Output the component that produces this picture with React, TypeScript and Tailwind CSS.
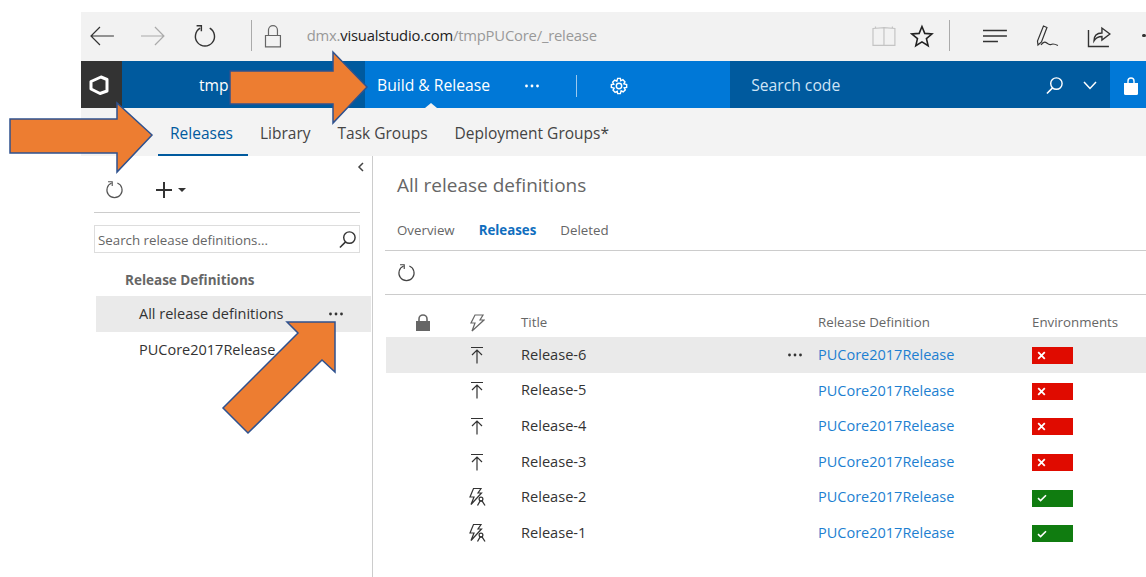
import React from "react";

const Ic = ({ w, h, vb, className, children }: { w: number; h: number; vb?: string; className?: string; children: React.ReactNode }) => (
  <svg width={w} height={h} viewBox={vb ?? `0 0 ${w} ${h}`} fill="none" stroke="currentColor" strokeWidth={1.2} className={className}>
    {children}
  </svg>
);

const Refresh = ({ s = 20, className }: { s?: number; className?: string }) => (
  <Ic w={s} h={s} vb="0 0 20 20" className={className}>
    <path d="M7 3.2A8 8 0 1 0 13 3.2" />
    <path d="M3.2 1.8H7.6V6.2" />
  </Ic>
);

const Search = ({ s = 20, className }: { s?: number; className?: string }) => (
  <Ic w={s} h={s} vb="0 0 20 20" className={className}>
    <circle cx="12" cy="8" r="6" strokeWidth={1.5} />
    <path d="M8 12.5L2 18.5" strokeWidth={1.6} />
  </Ic>
);

const Dots = ({ className }: { className?: string }) => (
  <svg width="16" height="4" viewBox="0 0 16 4" fill="currentColor" className={className}>
    <circle cx="2.5" cy="2" r="1.4" />
    <circle cx="8" cy="2" r="1.4" />
    <circle cx="13.5" cy="2" r="1.4" />
  </svg>
);

const UpBar = () => (
  <Ic w={14} h={18} className="text-[#333]">
    <path d="M1 1.5H13M7 17.5V4M2 9L7 4L12 9" />
  </Ic>
);

const BoltPerson = () => (
  <Ic w={20} h={20} className="text-[#333]">
    <path d="M6.5 1.5H14L11 6H14.5L4 17.5L7 10H3Z" strokeWidth={1.2} />
    <circle cx="14" cy="12" r="1.9" strokeWidth={1.2} />
    <path d="M10.5 18.5L13 14.2H15.2L18 18.5" strokeWidth={1.3} />
  </Ic>
);

const rows = [
  { t: "Release-6", up: true, ok: false, hl: true },
  { t: "Release-5", up: true, ok: false },
  { t: "Release-4", up: true, ok: false },
  { t: "Release-3", up: true, ok: false },
  { t: "Release-2", up: false, ok: true },
  { t: "Release-1", up: false, ok: true },
];

function Row({ t, up, ok, hl }: { t: string; up: boolean; ok: boolean; hl?: boolean }) {
  return (
    <div className={`flex h-[35.6px] items-center ${hl ? "bg-[#eaeaea]" : ""}`}>
      <div className="ml-[71px] flex w-[40px] justify-center">{up ? <UpBar /> : <BoltPerson />}</div>
      <div className="ml-[24px] w-[266px] text-[14.6px] text-[#333]">{t}</div>
      <div className="flex w-[31px] items-center">{hl && <Dots className="text-[#333]" />}</div>
      <div className="w-[214px] text-[14.5px] text-[#1d7fd1]">PUCore2017Release</div>
      <div className={`mt-[2px] flex h-[17px] w-[41px] items-center pl-[5px] ${ok ? "bg-[#107c10]" : "bg-[#e00b00]"}`}>
        {ok ? (
          <svg width="10" height="8" viewBox="0 0 10 8" fill="none" stroke="white" strokeWidth={1.6}>
            <path d="M1 4.2L3.6 6.6L9 1.2" />
          </svg>
        ) : (
          <svg width="9" height="9" viewBox="0 0 9 9" fill="none" stroke="white" strokeWidth={1.8}>
            <path d="M1.2 1.2L7.8 7.8M7.8 1.2L1.2 7.8" />
          </svg>
        )}
      </div>
    </div>
  );
}

export default function App() {
  return (
    <div className="relative h-[577px] w-[1146px] overflow-hidden bg-white pl-[81px] pt-[12px] font-['Open_Sans',sans-serif]">
      {/* Browser toolbar */}
      <div className="flex h-[49px] items-center bg-[#f2f2f2] pb-[2px] text-[#222]">
        <Ic w={26} h={22} className="ml-[8px] text-[#333]">
          <path d="M25 11H2M11 2L2 11L11 20" />
        </Ic>
        <Ic w={26} h={22} className="ml-[25px] text-[#aaa]">
          <path d="M1 11H24M15 2L24 11L15 20" />
        </Ic>
        <Ic w={24} h={24} vb="0 0 20 20" className="ml-[27px] text-[#333]">
          <path d="M6 3.5A8 8 0 1 0 14 3.5" />
          <path d="M3 1.5H7V6" />
        </Ic>
        <div className="ml-[34px] h-[31px] w-px bg-[#aaa]" />
        <Ic w={18} h={24} className="ml-[12px] text-[#666]">
          <path d="M1.5 11.5H16.5V23H1.5ZM4.5 11.5V6A4.5 4.5 0 0 1 13.5 6V11.5" />
        </Ic>
        <div className="ml-[25px] w-[568px] whitespace-nowrap text-[14.8px] tracking-[-0.2px] text-[#999]">
          dmx.<span className="text-[#222]">visualstudio.com</span>/tmpPUCore/_release
        </div>
        <Ic w={24} h={22} className="text-[#c4c4c4]">
          <path d="M1 3.5L12 2.5V20.5H1ZM12 2.5L23 3.5V20.5H12ZM3.5 1.5V3M20.5 1.5V3" />
        </Ic>
        <Ic w={24} h={24} className="ml-[14px] text-[#222]">
          <path strokeWidth={1.6} d="M12 2.5L14.8 9.4L22 10L16.5 14.6L18.2 21.8L12 17.9L5.8 21.8L7.5 14.6L2 10L9.2 9.4Z" />
        </Ic>
        <div className="ml-[15px] h-[31px] w-px bg-[#aaa]" />
        <Ic w={24} h={14} className="ml-[33px] text-[#333]">
          <path strokeWidth={1.4} d="M0 1.5H24M0 7H24M0 12.5H15" />
        </Ic>
        <Ic w={24} h={24} className="ml-[28px] text-[#333]">
          <path d="M8.5 2L12 3.5L6.5 18L3 21L2.5 17ZM6 21C11 14 12 22 16 20.5C18 19.5 20 20 23 21.5" />
        </Ic>
        <Ic w={24} h={24} className="ml-[28px] text-[#333]">
          <path strokeWidth={1.4} d="M1.5 6V22.5H22M7 17C7 11 11 9 15 9V4L23 10L15 16V12.5C12 12.5 9 13.5 7 17Z" />
        </Ic>
        <div className="ml-[31px] h-[3px] w-[4px] shrink-0 rounded-full bg-[#333]" />
      </div>

      {/* Blue nav */}
      <div className="relative flex h-[47px] items-stretch bg-[#0078d7] pt-[2px] text-white">
        <div className="-mt-[2px] flex w-[41px] items-center justify-center bg-[#333] pr-[6px]">
          <svg width="24" height="24" viewBox="0 0 24 24" fill="none" stroke="white" strokeWidth={3} strokeLinejoin="round">
            <path d="M4 8.5L14 4L20 6.5V18L13 20.5L4 16Z" />
          </svg>
        </div>
        <div className="-mt-[2px] flex w-[243px] items-center bg-[#005a9e] pl-[77px] pt-[2px] text-[15.6px]">tmp</div>
        <div className="ml-[12px] text-[15.7px] leading-[45px] text-white">Build &amp; Release</div>
        <div className="ml-[34px] flex items-center"><Dots className="text-white" /></div>
        <div className="ml-[36px] flex items-center"><div className="h-[22px] w-px bg-[#9cc9ee]" /></div>
        <div className="ml-[33px] flex items-center">
          <Ic w={18} h={18} vb="0 0 20 20" className="text-white">
            <circle cx="10" cy="10" r="3" strokeWidth={1.6} />
            <path strokeWidth={1.6} d="M8.5 1.5H11.5L12 4.2L14.3 3L16.6 5.3L15.4 7.6L18.5 8.5V11.5L15.8 12L17 14.3L14.7 16.6L12.4 15.4L11.5 18.5H8.5L8 15.8L5.7 17L3.4 14.7L4.6 12.4L1.5 11.5V8.5L4.2 8L3 5.7L5.3 3.4L7.6 4.6Z" />
          </Ic>
        </div>
        <div className="-mt-[2px] ml-[102px] flex w-[380px] items-center bg-[#005a9e] pl-[21px] pt-[2px] text-[#cfe4f6]">
          <span className="w-[294px] text-[15.7px]">Search code</span>
          <Search s={19} className="text-white" />
          <Ic w={14} h={9} className="ml-[19px] text-white">
            <path strokeWidth={1.5} d="M1 1L7 7.5L13 1" />
          </Ic>
        </div>
        <div className="ml-[13px] flex items-center">
          <svg width="16" height="18" viewBox="0 0 16 18" fill="white">
            <path d="M1 6H15V16.5A1.5 1.5 0 0 1 13.5 18H2.5A1.5 1.5 0 0 1 1 16.5Z" />
            <path d="M5 6V4A3 3 0 0 1 11 4V6" fill="none" stroke="white" strokeWidth={1.4} />
          </svg>
        </div>
        <div className="absolute bottom-0 left-[344px] h-0 w-0 border-x-[6px] border-b-[5px] border-x-transparent border-b-[#f3f3f3]" />
      </div>

      {/* Hub tabs */}
      <div className="flex h-[48px] bg-[#f3f3f3] text-[15.5px] text-[#444]">
        <div className="ml-[77px] flex h-full w-[90px] items-center border-b-2 border-[#005a9e] pl-[12px] pt-[5px] text-[#005a9e]">Releases</div>
        <div className="ml-[12px] flex items-center pt-[3px]">Library</div>
        <div className="ml-[27px] flex items-center pt-[3px]">Task Groups</div>
        <div className="ml-[27px] flex items-center pt-[3px]">Deployment Groups*</div>
      </div>

      <div className="flex h-[421px]">
        {/* Sidebar */}
        <aside className="relative w-[292px] shrink-0 border-r border-[#ccc]">
          <svg width="7" height="10" viewBox="0 0 7 10" fill="none" stroke="#444" strokeWidth={1.5} className="absolute right-[8px] top-[6px]">
            <path d="M6 1L2 5L6 9" />
          </svg>
          <div className="ml-[13px] flex h-[57px] w-[266px] items-center border-b border-[#ccc] pt-[11px] text-[#333]">
            <Refresh s={19} className="ml-[11px] text-[#555]" />
            <Ic w={16} h={16} className="ml-[32px]">
              <path strokeWidth={2} d="M8 0V16M0 8H16" />
            </Ic>
            <div className="ml-[6px] h-0 w-0 border-x-[4px] border-t-[4px] border-x-transparent border-t-[#333]" />
          </div>
          <div className="ml-[13px] mt-[12px] flex h-[28px] w-[266px] items-center justify-between border border-[#ddd] bg-white pl-[3px] pr-[2px]">
            <span className="pt-[4px] text-[13.3px] text-[#666]">Search release definitions...</span>
            <Search s={19} className="text-[#333]" />
          </div>
          <div className="ml-[44px] mt-[17px] text-[13.5px] font-bold leading-[20px] text-[#666]">Release Definitions</div>
          <div className="ml-[15px] mt-[6px] flex h-[36px] w-[275px] items-center justify-between bg-[#eaeaea] pl-[43px] pr-[27px] text-[14.5px] text-[#333]">
            All release definitions
            <Dots className="text-[#333]" />
          </div>
          <div className="ml-[58px] flex h-[36px] items-center text-[14.5px] text-[#333]">PUCore2017Release</div>
        </aside>

        {/* Main */}
        <main className="min-w-0 flex-1">
          <h1 className="ml-[24px] mt-[14px] text-[19px] font-normal leading-[30px] text-[#666]">All release definitions</h1>
          <div className="ml-[12px] mt-[20px] flex h-[31px] gap-[24px] border-b border-[#ccc] pb-[10px] pl-[12px] text-[13.3px] leading-[20px] text-[#666]">
            <span>Overview</span>
            <span className="font-bold text-[#106ebe]">Releases</span>
            <span>Deleted</span>
          </div>
          <div className="ml-[12px] flex h-[44px] items-center border-b border-[#ccc] pl-[12px]">
            <Refresh s={19} className="text-[#444]" />
          </div>
          <div className="ml-[13px] w-[800px]">
            <div className="flex h-[42px] items-center pt-[13px] text-[13.3px] text-[#666]">
              <svg width="14" height="17" viewBox="0 0 14 17" fill="#666" className="ml-[30px]">
                <path d="M0 7H14V17H0Z" />
                <path d="M3 7V5A4 4 0 0 1 11 5V7" fill="none" stroke="#666" strokeWidth={1.6} />
              </svg>
              <Ic w={16} h={18} className="ml-[39px] text-[#666]">
                <path d="M6 1H14L11 6H15L3 17L6 9H2Z" />
              </Ic>
              <span className="ml-[36px] w-[297px]">Title</span>
              <span className="w-[214px]">Release Definition</span>
              <span>Environments</span>
            </div>
            {rows.map((r) => (
              <Row key={r.t} {...r} />
            ))}
          </div>
        </main>
      </div>

      {/* Annotation arrows */}
      <svg width="1146" height="577" viewBox="0 0 1146 577" className="pointer-events-none absolute left-0 top-0" fill="#ed7d31" stroke="#2f528f" strokeWidth={1.5}>
        <polygon points="10,119 117,119 117,103 152,135 117,172 117,153 10,153" />
        <polygon points="230,71 333,71 333,52 367,87 333,123 333,104 230,104" />
        <polygon points="287,322 335,322 335,372 322,360 248,433 223,408 298,333" />
      </svg>
    </div>
  );
}
